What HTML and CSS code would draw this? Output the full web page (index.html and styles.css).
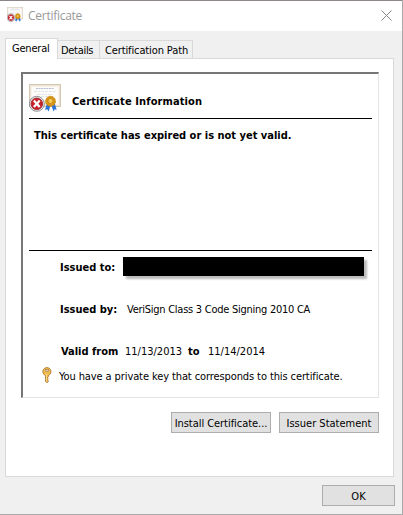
FILE: index.html
```html
<!DOCTYPE html>
<html lang="en">
<head>
<meta charset="utf-8">
<title>Certificate</title>
<link rel="stylesheet" href="styles.css">
</head>
<body>
<svg width="0" height="0" class="defs" aria-hidden="true">
  <symbol id="cert" viewBox="0 0 32 28" preserveAspectRatio="none">
    <rect x=".5" y=".5" width="31" height="22" fill="#f7f2e9" stroke="#d3c7b4"/>
    <rect x="1.5" y="1.5" width="29" height="20" fill="none" stroke="#e1d6c3" stroke-dasharray="1 1"/>
    <rect x="3" y="3" width="26" height="17" fill="#fdfcf9"/>
    <path d="M7 4.5h18" stroke="#b5bfd6" stroke-dasharray="2 .6"/>
    <path d="M5 7.5h22M8 10.5h16M12 12.5h12" stroke="#e1e4eb" stroke-dasharray="3 .7"/>
    <path d="M18 19l-2 7 2.2-.8 1.5 2.3 2-7zM22 20l2.5 7.5 1.3-2.2 1.9.5-2.2-7z" fill="#2d72d9"/>
    <circle cx="21.5" cy="17.3" r="5" fill="#d99612" stroke="#c98a16" stroke-dasharray="2 1"/>
    <circle cx="21.5" cy="17" r="2.6" fill="#f4c95a" stroke="#c98a16"/>
    <circle cx="7.8" cy="19.8" r="7.5" fill="#eeeeee" stroke="#777777" stroke-width=".8"/>
    <circle cx="7.8" cy="19.8" r="5.8" fill="#c92029" stroke="#98212a" stroke-width=".8"/>
    <path d="M4.9 16.5l5.8 6.6M10.7 16.5l-5.8 6.6" stroke="#ffffff" stroke-width="2.3"/>
  </symbol>
</svg>
<div class="window">
  <header class="titlebar">
    <svg class="title-icon"><use href="#cert"/></svg>
    <span class="title">Certificate</span>
    <svg class="close" viewBox="0 0 11 11"><path d="M.5.5l10 10M10.5.5l-10 10" stroke="#858585" fill="none"/></svg>
  </header>
  <nav class="tabs">
    <span class="tab active t-general">General</span>
    <span class="tab t-details">Details</span>
    <span class="tab t-path">Certification Path</span>
  </nav>
  <main class="pane">
    <section class="sheet">
      <div class="heading">
        <svg class="cert-icon"><use href="#cert"/></svg>
        <b class="info">Certificate Information</b>
      </div>
      <div class="message"><b class="expired">This certificate has expired or is not yet valid.</b></div>
      <div class="row issued-to"><b class="label to-label">Issued to:</b><span class="redacted"></span></div>
      <div class="row issued-by"><b class="label by-label">Issued by:</b><span class="issuer">VeriSign Class 3 Code Signing 2010 CA</span></div>
      <div class="row valid"><b class="label from-label">Valid from</b><span class="date">11/13/2013</span><b class="until">to</b><span class="date">11/14/2014</span></div>
      <div class="row key-row">
        <svg class="key" viewBox="0 0 10 16"><path d="M3.5 8.5v6l1.3 1.2 1.5-1.2v-1l-1-.8 1-.9-1-.9 1-1V8.5A4.1 4.1 0 1 0 3.5 8.5z" fill="#f2bd50" stroke="#a86c25" stroke-width=".8"/><path d="M3 3.4h4" stroke="#74502b" stroke-width="1.8"/><path d="M3.3 3.4h3.4" stroke="#ffffff" stroke-width=".8"/><path d="M4.4 7v7" stroke="#ffe39a" stroke-width=".8"/></svg>
        <span class="private">You have a private key that corresponds to this certificate.</span>
      </div>
    </section>
    <div class="actions">
      <button class="install">Install Certificate...</button>
      <button class="statement">Issuer Statement</button>
    </div>
  </main>
  <footer class="footer"><button class="ok">OK</button></footer>
</div>
</body>
</html>
```
FILE: styles.css
```css
* { box-sizing: border-box; }
body { margin: 0; overflow: hidden; background: #aaa; font: 11px/14px "DejaVu Sans Condensed", "DejaVu Sans", sans-serif; font-stretch: condensed; color: #000; white-space: nowrap; }
.defs { position: absolute; }
.window { width: 402px; height: 514px; background: #f0f0f0; border-top: 1px solid #8c8688; box-shadow: 0 1px #999, 1px 0 #aaa; }
.titlebar { display: flex; align-items: flex-start; height: 30px; background: #fff; padding: 6px 10px 0 7px; }
.title-icon { width: 16px; height: 15px; }
.title { margin: 1px 0 0 5px; font: 12px/16px "Open Sans", sans-serif; letter-spacing: -.27px; color: #999; }
.close { width: 11px; height: 11px; margin: 3px 0 0 auto; }
.tabs { display: flex; align-items: flex-end; height: 27px; padding-left: 5px; }
.tab { height: 18px; padding: 3px 0 0 3px; border: 1px solid #d9d9d9; border-bottom: 0; border-left: 0; }
.tab.active { position: relative; width: 53px; height: 21px; margin-bottom: -1px; padding: 3px 0 0 6px; border-left: 1px solid #d9d9d9; background: #fff; letter-spacing: -.2px; }
.t-details { width: 42px; letter-spacing: -.3px; }
.t-path { width: 93px; padding-left: 5px; letter-spacing: -.12px; }
.pane { width: 389px; height: 419px; margin-left: 5px; padding: 13px 14px 0 15px; border: 1px solid #d9d9d9; background: #fff; }
.sheet { width: 358px; height: 326px; padding: 10px 6px 0; border: 1px solid #e3e3e3; border-top: 2px solid #767676; border-left: 2px solid #767676; }
.heading { display: flex; height: 35px; border-bottom: 1px solid #000; }
.cert-icon { width: 32px; height: 28px; }
.info { margin: 11px 0 0 11px; letter-spacing: .1px; }
.message { height: 132px; padding: 10px 0 0 5px; border-bottom: 1px solid #000; }
.row { display: flex; padding-left: 31px; }
.label { width: 67px; }
.issued-to { height: 42px; padding-top: 6px; }
.to-label { width: 63px; margin-top: 4px; }
.redacted { width: 241px; height: 19px; background: #000; box-shadow: 3px 3px 2px #bbb; }
.issued-by { height: 42px; padding-top: 10px; }
.issuer { letter-spacing: -.26px; }
.valid { height: 31px; padding-top: 10px; }
.from-label { width: 65px; padding-left: 1px; }
.until { width: 20px; margin-left: 7px; }
.date { width: 56px; }
.key-row { padding-left: 13px; }
.key { width: 10px; height: 16px; margin-top: 1px; }
.private { margin: 4px 0 0 7px; letter-spacing: -.1px; }
.actions { display: flex; justify-content: flex-end; gap: 8px; padding-top: 14px; }
button { width: 100px; height: 21px; padding: 2px 0 0; border: 1px solid #adadad; background: #e1e1e1; font: inherit; color: #000; }
.install { letter-spacing: -.05px; }
.footer { display: flex; justify-content: flex-end; padding: 8px 7px 0 0; }
.ok { width: 73px; }
```
